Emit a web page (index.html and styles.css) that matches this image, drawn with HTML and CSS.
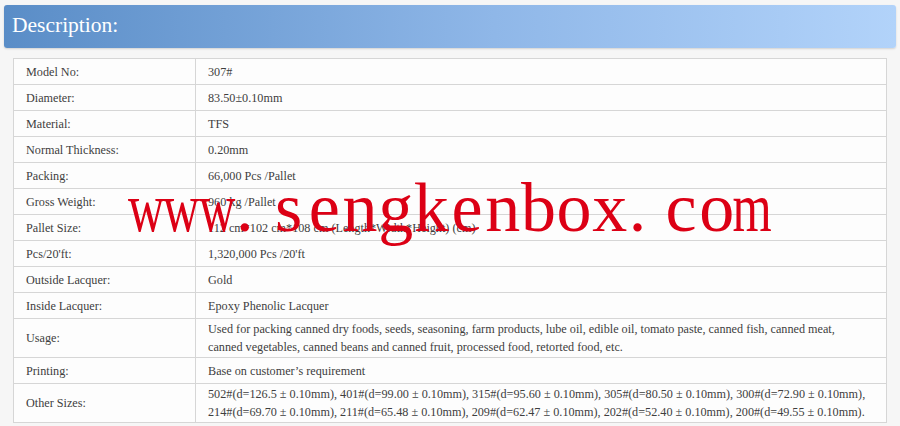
FILE: index.html
```html
<!DOCTYPE html>
<html>
<head>
<meta charset="utf-8">
<link rel="stylesheet" href="styles.css">
</head>
<body>
<div class="page">
  <div class="title-bar"><h2 class="title">Description:</h2></div>
  <div class="table-wrap">
    <table class="spec">
      <tr><td class="label">Model No:</td><td>307#</td></tr>
      <tr><td class="label">Diameter:</td><td>83.50±0.10mm</td></tr>
      <tr><td class="label">Material:</td><td>TFS</td></tr>
      <tr><td class="label">Normal Thickness:</td><td>0.20mm</td></tr>
      <tr><td class="label">Packing:</td><td>66,000 Pcs /Pallet</td></tr>
      <tr><td class="label">Gross Weight:</td><td>960 kg /Pallet</td></tr>
      <tr><td class="label">Pallet Size:</td><td>112 cm*102 cm*108 cm (Length*Width*Height) (cm)</td></tr>
      <tr><td class="label">Pcs/20'ft:</td><td>1,320,000 Pcs /20'ft</td></tr>
      <tr><td class="label">Outside Lacquer:</td><td>Gold</td></tr>
      <tr><td class="label">Inside Lacquer:</td><td>Epoxy Phenolic Lacquer</td></tr>
      <tr><td class="label">Usage:</td><td class="multi">Used for packing canned dry foods, seeds, seasoning, farm products, lube oil, edible oil, tomato paste, canned fish, canned meat, canned vegetables, canned beans and canned fruit, processed food, retorted food, etc.</td></tr>
      <tr><td class="label">Printing:</td><td>Base on customer’s requirement</td></tr>
      <tr><td class="label">Other Sizes:</td><td class="multi">502#(d=126.5 ± 0.10mm), 401#(d=99.00 ± 0.10mm), 315#(d=95.60 ± 0.10mm), 305#(d=80.50 ± 0.10mm), 300#(d=72.90 ± 0.10mm), 214#(d=69.70 ± 0.10mm), 211#(d=65.48 ± 0.10mm), 209#(d=62.47 ± 0.10mm), 202#(d=52.40 ± 0.10mm), 200#(d=49.55 ± 0.10mm).</td></tr>
    </table>
  </div>
  <div class="watermark"><span class="ch"><span class="sq">w</span></span><span class="ch"><span class="sq">w</span></span><span class="ch"><span class="sq">w</span></span><span class="ch dot">.</span><span class="ch">s</span><span class="ch">e</span><span class="ch">n</span><span class="ch">g</span><span class="ch">k</span><span class="ch">e</span><span class="ch">n</span><span class="ch">b</span><span class="ch">o</span><span class="ch">x</span><span class="ch dot">.</span><span class="ch">c</span><span class="ch">o</span><span class="ch"><span class="sq">m</span></span></div>
</div>
</body>
</html>
```

FILE: styles.css
```css
html, body {
  margin: 0;
  padding: 0;
  background: #f6f6f6;
}
.page {
  position: relative;
  width: 900px;
  height: 426px;
  padding: 5px 4px 0;
  box-sizing: border-box;
  font-family: "Liberation Serif", "Times New Roman", serif;
}
.title-bar {
  height: 43px;
  border-radius: 3px;
  background: linear-gradient(to right, #5a8dc7 0%, #8fb7e8 55%, #b2d3fa 100%);
  box-shadow: 0 1px 2px rgba(0,0,0,0.15);
  display: flex;
  align-items: center;
  padding-left: 8px;
}
.title {
  margin: 0;
  color: #ffffff;
  font-weight: normal;
  font-size: 21.5px;
  line-height: 1;
  padding-bottom: 1px;
}
.table-wrap {
  margin: 10px 9px 0;
}
.spec {
  width: 874px;
  border-collapse: collapse;
  background: #fdfdfd;
  border: 1px solid #c4c4c4;
  font-size: 12.2px;
  color: #3e3e3e;
}
.spec td {
  border: 1px solid #d6d6d6;
  height: 26px;
  padding: 1px 12px 1px;
  line-height: 18px;
  vertical-align: middle;
  box-sizing: border-box;
}
.spec td.multi {
  padding-right: 18px;
}
.spec td.label {
  width: 182px;
}
.watermark {
  position: absolute;
  left: 128px;
  top: 173px;
  white-space: nowrap;
  font-family: "Liberation Serif", "Times New Roman", serif;
  font-size: 70px;
  line-height: 70px;
  color: #dc0015;
}
.ch {
  display: inline-block;
  width: 35.7px;
  text-align: center;
}
.ch.dot {
  text-align: left;
  text-indent: 1px;
}
.sq {
  display: inline-block;
  transform: scaleX(0.72);
  margin: 0 -10px;
}
```
